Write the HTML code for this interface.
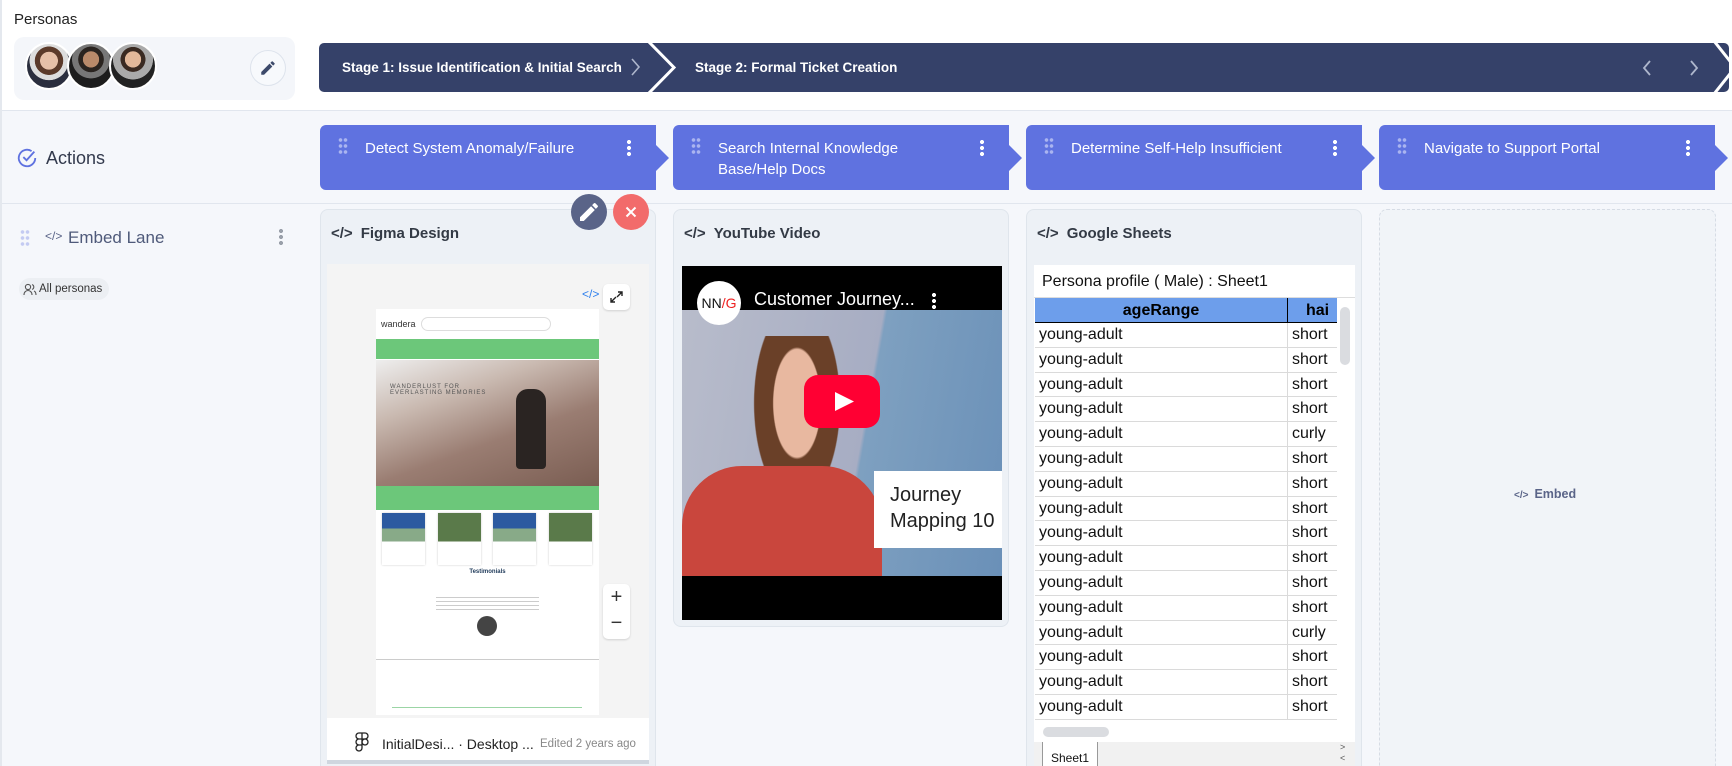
<!DOCTYPE html>
<html><head><meta charset="utf-8"><style>
*{box-sizing:border-box;margin:0;padding:0}
html,body{width:1732px;height:766px;overflow:hidden}
body{background:#f5f7fb;font-family:"Liberation Sans",sans-serif;position:relative}
.abs{position:absolute}
.hdr{left:0;top:0;width:1732px;height:111px;background:#fff;border-bottom:1px solid #e1e6ee}
.act{position:absolute;top:125px;width:349px;height:65px;background:#5f72e0;clip-path:polygon(0 0,336px 0,336px 20px,349px 33px,336px 46px,336px 100%,0 100%);border-radius:6px 0 0 6px}
.act .t{position:absolute;left:45px;top:13px;color:#fff;font-size:15px;line-height:21px;width:240px}
.dots6{position:absolute;width:10px;height:18px;background:radial-gradient(circle,currentColor 1.6px,transparent 2px) 0 0/5px 6px}
.keb{position:absolute;width:4px;height:18px;background:radial-gradient(circle,currentColor 1.9px,transparent 2.2px) 0 0/4px 6px}
.card{position:absolute;background:#edf1f6;border:1px solid #dfe5ec;border-radius:8px;overflow:hidden}
.card h3{position:absolute;left:10px;top:15px;font-size:15px;font-weight:bold;color:#333a45;display:flex;align-items:center;gap:8px}
.row{height:24.8px;border-bottom:1px solid #dadada;display:flex;font-size:16px;color:#111;line-height:24px}
.row div:first-child{width:253px;border-right:1px solid #dadada;padding-left:4px}
.row div:last-child{padding-left:4px}
</style></head><body>
<div class="abs hdr"></div>
<div class="abs" style="left:14px;top:11px;font-size:15px;color:#222">Personas</div>
<div class="abs" style="left:14px;top:37px;width:281px;height:63px;background:#f4f6fa;border-radius:10px"></div>
<div class="abs" style="left:25px;top:42px;width:48px;height:48px;border-radius:50%;border:2px solid #fff;background:radial-gradient(circle at 50% 38%,#e6c0a8 0 25%,#5b3a2a 26% 40%,#ddd 41% 55%,#2a2e3e 56%)"></div>
<div class="abs" style="left:67px;top:42px;width:48px;height:48px;border-radius:50%;border:2px solid #fff;background:radial-gradient(circle at 50% 35%,#b98a6a 0 22%,#2a2420 23% 35%,#777 36% 52%,#1d1d1d 53%)"></div>
<div class="abs" style="left:109px;top:42px;width:48px;height:48px;border-radius:50%;border:2px solid #fff;background:radial-gradient(circle at 50% 35%,#e2b89a 0 22%,#3a2a22 23% 34%,#aaa 35% 55%,#222 56%)"></div>
<div class="abs" style="left:250px;top:50px;width:36px;height:36px;border-radius:50%;border:1px solid #dde3ec;background:#f7f9fc"></div>
<svg class="abs" style="left:259px;top:59px" width="18" height="18" viewBox="0 0 24 24"><path d="M3 17.25V21h3.75L17.8 9.940l-3.75-3.75L3 17.25zM20.7 7.04a1 1 0 000-1.41l-2.34-2.34a1 1 0 00-1.41 0l-1.83 1.830 3.75 3.75 1.83-1.83z" fill="#3d4a6b"/></svg>

<svg class="abs" style="left:319px;top:43px" width="1413" height="49">
<rect x="0" y="0" width="1410" height="49" rx="5" fill="#354169"/>
<polyline points="329,-2 355,24.5 329,51" fill="none" stroke="#fff" stroke-width="3"/>
<polyline points="1395,-2 1416,24.5 1395,51" fill="none" stroke="#fff" stroke-width="3"/>
<polyline points="313,16 320,24 313,32" fill="none" stroke="#aeb6cc" stroke-width="1.6"/>
<polyline points="1331,18 1325,25 1331,32" fill="none" stroke="#aeb6cc" stroke-width="1.8"/>
<polyline points="1372,18 1378,25 1372,32" fill="none" stroke="#aeb6cc" stroke-width="1.8"/>
<text x="23" y="29" fill="#fff" font-size="13.5" font-weight="bold" font-family="Liberation Sans">Stage 1: Issue Identification &amp; Initial Search</text>
<text x="376" y="29" fill="#fff" font-size="13.5" font-weight="bold" font-family="Liberation Sans">Stage 2: Formal Ticket Creation</text>
</svg>

<svg class="abs" style="left:16px;top:147px" width="22" height="22" viewBox="0 0 24 24"><path d="M21 12a9 9 0 11-4-7.5" fill="none" stroke="#5f72e0" stroke-width="2"/><path d="M8 11l3.5 3.5L20 5" fill="none" stroke="#5f72e0" stroke-width="2"/></svg>
<div class="abs" style="left:46px;top:148px;font-size:18px;color:#333a4d">Actions</div>
<div class="abs" style="left:0;top:203px;width:1732px;height:1px;background:#e1e6ee"></div>

<div class="act" style="left:320px"><span class="dots6" style="left:18px;top:12px;color:#aab4f0"></span><div class="t">Detect System Anomaly/Failure</div><span class="keb" style="left:307px;top:14px;color:#fff"></span></div>
<div class="act" style="left:673px"><span class="dots6" style="left:18px;top:12px;color:#aab4f0"></span><div class="t">Search Internal Knowledge Base/Help Docs</div><span class="keb" style="left:307px;top:14px;color:#fff"></span></div>
<div class="act" style="left:1026px"><span class="dots6" style="left:18px;top:12px;color:#aab4f0"></span><div class="t">Determine Self-Help Insufficient</div><span class="keb" style="left:307px;top:14px;color:#fff"></span></div>
<div class="act" style="left:1379px"><span class="dots6" style="left:18px;top:12px;color:#aab4f0"></span><div class="t">Navigate to Support Portal</div><span class="keb" style="left:307px;top:14px;color:#fff"></span></div>

<span class="dots6" style="left:20px;top:229px;color:#c4cbf2"></span>
<div class="abs" style="left:45px;top:229px;font-size:12px;color:#5a6488">&lt;/&gt;</div>
<div class="abs" style="left:68px;top:228px;font-size:17px;color:#4f5a7a">Embed Lane</div>
<span class="keb" style="left:279px;top:228px;color:#9aa0aa"></span>
<div class="abs" style="left:19px;top:278px;width:90px;height:22px;border-radius:11px;background:#eceff3;font-size:11.5px;color:#333;line-height:22px;padding-left:20px">All personas</div>
<svg class="abs" style="left:23px;top:283px" width="14" height="13" viewBox="0 0 14 13"><circle cx="5" cy="4" r="2.6" fill="none" stroke="#555" stroke-width="1.1"/><path d="M1 12c0-3 2-4.5 4-4.5s4 1.5 4 4.5M9 1.6a2.5 2.5 0 010 4.8M11 8c1.3.6 2 2 2 4" fill="none" stroke="#555" stroke-width="1.1"/></svg>

<!-- Figma card -->
<div class="card" style="left:320px;top:209px;width:336px;height:557px;border-bottom:none;border-radius:8px 8px 0 0">
<h3><span style="font-size:15px">&lt;/&gt;</span>Figma Design</h3>
<div class="abs" style="left:6px;top:54px;width:322px;height:454px;background:#f4f4f4"></div>
<div class="abs" style="left:261px;top:77px;color:#2f80ed;font-size:12px">&lt;/&gt;</div>
<div class="abs" style="left:282px;top:74px;width:27px;height:26px;background:#fff;border-radius:5px;box-shadow:0 1px 2px rgba(0,0,0,.15)"><svg width="27" height="26"><path d="M8 18l5-5M8 14v4h4M19 8l-5 5M19 12V8h-4" fill="none" stroke="#222" stroke-width="1.4"/></svg></div>
<div class="abs" style="left:55px;top:99px;width:223px;height:406px;background:#fff">
 <div style="position:absolute;left:5px;top:10px;font-size:9px;color:#333">wandera</div>
 <div style="position:absolute;left:45px;top:8px;width:130px;height:14px;border:1px solid #ddd;border-radius:7px"></div>
 <div style="position:absolute;left:0;top:30px;width:223px;height:20px;background:#6cc77a"></div>
 <div style="position:absolute;left:0;top:51px;width:223px;height:126px;background:linear-gradient(160deg,#eee 0%,#c9b9b0 30%,#9a7d72 60%,#7a5d52 100%)"></div>
 <div style="position:absolute;left:140px;top:80px;width:30px;height:80px;background:#2a2422;border-radius:12px 12px 4px 4px"></div>
 <div style="position:absolute;left:14px;top:75px;font-size:6px;color:#555;letter-spacing:1px">WANDERLUST FOR<br>EVERLASTING MEMORIES</div>
 <div style="position:absolute;left:0;top:177px;width:223px;height:24px;background:#6cc77a"></div>
 <div style="position:absolute;left:6px;top:204px;width:43px;height:52px;background:linear-gradient(#2c5aa0 0 30%,#8a8 30% 55%,#fff 55%);box-shadow:0 0 2px #ccc"></div>
 <div style="position:absolute;left:62px;top:204px;width:43px;height:52px;background:linear-gradient(#5a7a4a 0 55%,#fff 55%);box-shadow:0 0 2px #ccc"></div>
 <div style="position:absolute;left:117px;top:204px;width:43px;height:52px;background:linear-gradient(#2c5aa0 0 30%,#8a8 30% 55%,#fff 55%);box-shadow:0 0 2px #ccc"></div>
 <div style="position:absolute;left:173px;top:204px;width:43px;height:52px;background:linear-gradient(#5a7a4a 0 55%,#fff 55%);box-shadow:0 0 2px #ccc"></div>
 <div style="position:absolute;left:0;width:223px;top:260px;text-align:center;font-size:6px;font-weight:bold;color:#1f3a5a">Testimonials</div>
 <div style="position:absolute;left:60px;top:285px;width:103px;height:18px;background:repeating-linear-gradient(#fff 0 3px,#ccc 3px 4px)"></div>
 <div style="position:absolute;left:101px;top:307px;width:20px;height:20px;border-radius:50%;background:#444"></div>
 <div style="position:absolute;left:0;top:350px;width:223px;height:1px;background:#ccc"></div>
 <div style="position:absolute;left:16px;top:398px;width:190px;height:1px;background:#9bd5a5"></div>
</div>
<div class="abs" style="left:282px;top:374px;width:27px;height:55px;background:#fff;border-radius:5px;box-shadow:0 1px 2px rgba(0,0,0,.15);text-align:center;font-size:20px;line-height:26px;color:#333">+<br>−</div>
<div class="abs" style="left:6px;top:508px;width:322px;height:46px;background:#fff;border-bottom:4px solid #cfd6df"></div>
<svg class="abs" style="left:34px;top:522px" width="14" height="20" viewBox="0 0 14 20"><g fill="none" stroke="#222" stroke-width="1.3"><path d="M7 1H4a3 3 0 000 6h3zM7 1h3a3 3 0 010 6H7zM7 7H4a3 3 0 000 6h3zM7 13H4a3 3 0 103 3z"/><circle cx="10" cy="10" r="3"/></g></svg>
<div class="abs" style="left:61px;top:526px;font-size:14px;color:#222">InitialDesi... · Desktop ...</div>
<div class="abs" style="left:219px;top:528px;font-size:11.5px;color:#888">Edited 2 years ago</div>
</div>
<div class="abs" style="left:571px;top:194px;width:36px;height:36px;border-radius:50%;background:#5a6488"><svg width="36" height="36" viewBox="-6 -6 36 36"><path d="M3 17.25V21h3.75L17.8 9.94l-3.75-3.75L3 17.25zM20.7 7.04a1 1 0 000-1.41l-2.34-2.34a1 1 0 00-1.41 0l-1.83 1.83 3.75 3.75z" fill="#fff"/></svg></div>
<div class="abs" style="left:613px;top:194px;width:36px;height:36px;border-radius:50%;background:#f26b6b"><svg width="36" height="36"><path d="M13.5 13.5l9 9M22.5 13.5l-9 9" stroke="#fff" stroke-width="2"/></svg></div>

<!-- YouTube -->
<div class="card" style="left:673px;top:209px;width:336px;height:418px">
<h3><span>&lt;/&gt;</span>YouTube Video</h3>
<div class="abs" style="left:8px;top:56px;width:320px;height:354px;background:#000;overflow:hidden">
 <div style="position:absolute;left:0;top:44px;width:320px;height:266px;background:linear-gradient(100deg,#b8bccb 0%,#a7adc3 55%,#7ea0c0 56%,#6a90b8 100%)"></div>
 <div style="position:absolute;left:40px;top:70px;width:150px;height:240px;background:radial-gradient(ellipse at 50% 28%,#e8b8a0 0 22%,#6a4028 23% 40%,transparent 41%)"></div>
 <div style="position:absolute;left:0;top:200px;width:200px;height:110px;background:#c9463d;border-radius:60px 60px 0 0"></div>
 <div style="position:absolute;left:192px;top:205px;width:130px;height:77px;background:#fff;font-size:20px;color:#222;line-height:26px;padding:11px 0 0 16px;white-space:nowrap">Journey<br>Mapping 10</div>
 <div style="position:absolute;left:122px;top:109px;width:76px;height:53px;background:#ff0033;border-radius:14px"><svg width="76" height="53"><path d="M31 17l19 9.5-19 9.5z" fill="#fff"/></svg></div>
 <div style="position:absolute;left:15px;top:15px;width:44px;height:44px;border-radius:50%;background:#fff;font-size:14px;line-height:44px;text-align:center;color:#111">NN<span style="color:#e22">/G</span></div>
 <div style="position:absolute;left:72px;top:23px;font-size:18px;color:#fff">Customer Journey...</div>
 <span class="keb" style="left:250px;top:26px;color:#fff;height:18px"></span>
</div>
</div>

<!-- Sheets -->
<div class="card" style="left:1026px;top:209px;width:336px;height:557px;border-bottom:none;border-radius:8px 8px 0 0">
<h3><span>&lt;/&gt;</span>Google Sheets</h3>
<div class="abs" style="left:7px;top:55px;width:321px;height:502px;background:#fff;overflow:hidden">
 <div style="position:absolute;left:8px;top:8px;font-size:16px;color:#111">Persona profile ( Male) : Sheet1</div>
 <div style="position:absolute;left:0;top:32px;width:321px;height:1px;background:#ddd"></div>
 <div style="position:absolute;left:1px;top:33px;width:302px">
  <div style="display:flex;height:25px;background:#6d9eeb;font-weight:bold;font-size:16px;line-height:25px;border-bottom:1px solid #000"><div style="width:253px;text-align:center;border-right:1px solid #000">ageRange</div><div style="padding-left:18px">hai</div></div>
  <div class="row"><div>young-adult</div><div>short</div></div>
  <div class="row"><div>young-adult</div><div>short</div></div>
  <div class="row"><div>young-adult</div><div>short</div></div>
  <div class="row"><div>young-adult</div><div>short</div></div>
  <div class="row"><div>young-adult</div><div>curly</div></div>
  <div class="row"><div>young-adult</div><div>short</div></div>
  <div class="row"><div>young-adult</div><div>short</div></div>
  <div class="row"><div>young-adult</div><div>short</div></div>
  <div class="row"><div>young-adult</div><div>short</div></div>
  <div class="row"><div>young-adult</div><div>short</div></div>
  <div class="row"><div>young-adult</div><div>short</div></div>
  <div class="row"><div>young-adult</div><div>short</div></div>
  <div class="row"><div>young-adult</div><div>curly</div></div>
  <div class="row"><div>young-adult</div><div>short</div></div>
  <div class="row"><div>young-adult</div><div>short</div></div>
  <div class="row"><div>young-adult</div><div>short</div></div>
 </div>
 <div style="position:absolute;left:306px;top:42px;width:10px;height:58px;border-radius:5px;background:#dadce0"></div>
 <div style="position:absolute;left:9px;top:462px;width:66px;height:10px;border-radius:5px;background:#dadce0"></div>
 <div style="position:absolute;left:0;top:477px;width:321px;height:40px;background:#f1f1f1"></div>
 <div style="position:absolute;left:8px;top:477px;width:56px;height:40px;border-left:1px solid #999;border-right:1px solid #999;background:#fff;font-size:12px;color:#111;padding:9px 0 0 8px">Sheet1</div>
 <div style="position:absolute;left:306px;top:477px;font-size:9px;color:#555;line-height:11px">&gt;<br>&lt;</div>
</div>
</div>

<!-- Embed placeholder -->
<div class="abs" style="left:1379px;top:209px;width:337px;height:557px;border:1px dashed #d6dce5;border-bottom:none;border-radius:8px 8px 0 0;background:#f1f4f8"></div>
<div class="abs" style="left:1514px;top:487px;font-size:12.5px;font-weight:bold;color:#5a6488"><span style="font-size:10px;margin-right:6px">&lt;/&gt;</span>Embed</div>
<div class="abs" style="left:0;top:0;width:2px;height:766px;background:#e4e8ee"></div>
</body></html>
